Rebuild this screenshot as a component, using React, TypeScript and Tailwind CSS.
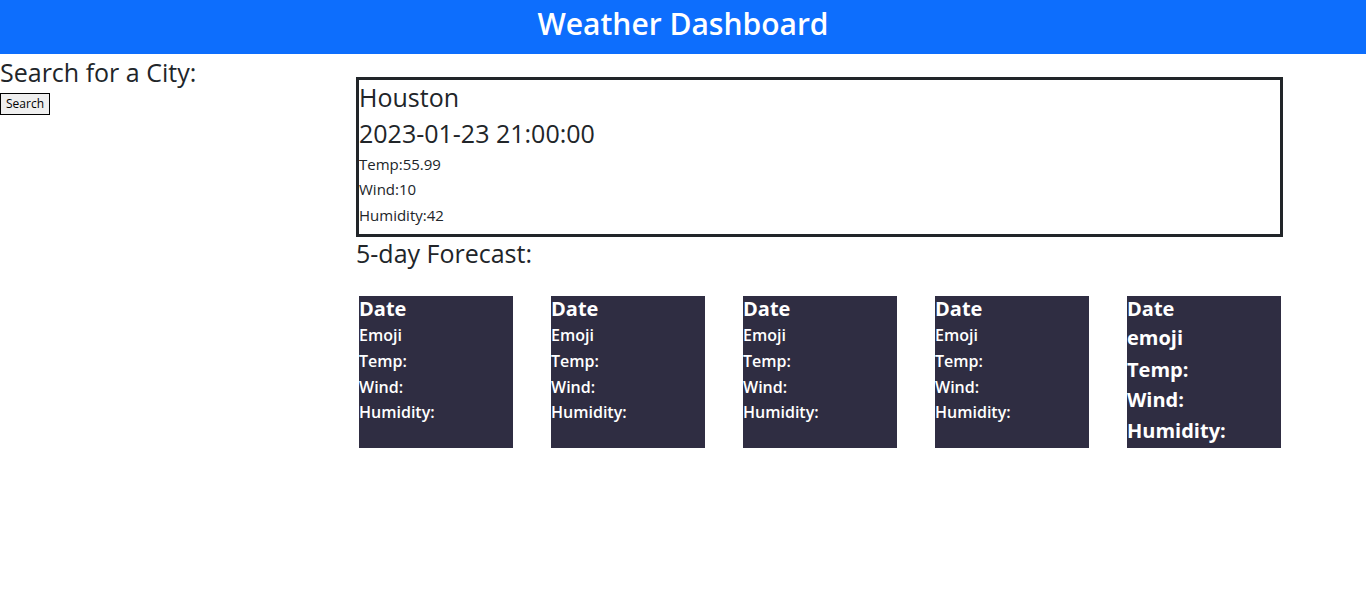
import React from "react";

const font = { fontFamily: '"Open Sans", "Noto Sans", sans-serif' };

function SmallCard() {
  return (
    <div className="w-[154px] h-[152px] bg-[#2f2d42] text-white font-semibold">
      <div className="text-[20px] font-bold leading-[26px]">Date</div>
      <div className="text-[16px] leading-[26px]">Emoji</div>
      <div className="text-[16px] leading-[26px]">Temp:</div>
      <div className="text-[16px] leading-[26px]">Wind:</div>
      <div className="text-[16px] leading-[25px]">Humidity:</div>
    </div>
  );
}

function BigCard() {
  return (
    <div className="w-[154px] h-[152px] bg-[#2f2d42] text-white font-bold">
      <div className="text-[20px] leading-[26px]">Date</div>
      <div className="text-[20px] leading-[32px]">emoji</div>
      <div className="text-[20px] leading-[31px]">Temp:</div>
      <div className="text-[20px] leading-[30px]">Wind:</div>
      <div className="text-[20px] leading-[31px]">Humidity:</div>
    </div>
  );
}

export default function App() {
  return (
    <div className="w-[1366px] h-[610px] bg-white text-[#212529]" style={font}>
      <header className="h-[54px] bg-[#0d6efd] flex items-center justify-center pb-[7px]">
        <h1 className="text-white text-[30px] font-semibold leading-none">Weather Dashboard</h1>
      </header>
      <div className="flex">
        <aside className="w-[356px] shrink-0">
          <h2 className="text-[25px] font-medium leading-[36px]">Search for a City:</h2>
          <button className="mt-[2px] h-[22px] px-[5px] text-[12px] leading-none border border-black bg-[#efefef] text-black">
            Search
          </button>
        </aside>
        <main className="flex-1">
          <section className="mt-[23px] w-[927px] h-[160px] border-[3px] border-[#212529]">
            <div className="text-[25px] font-medium leading-[34px]">Houston</div>
            <div className="text-[25px] font-medium leading-[36px] mt-[1px]">2023-01-23 21:00:00</div>
            <div className="text-[15px] leading-[26px]">Temp:55.99</div>
            <div className="text-[15px] leading-[25px]">Wind:10</div>
            <div className="text-[15px] leading-[26px]">Humidity:42</div>
          </section>
          <h2 className="text-[25px] font-medium leading-[36px] -mt-[2px]">5-day Forecast:</h2>
          <div className="flex gap-[38px] pl-[3px] mt-[25px]">
            <SmallCard />
            <SmallCard />
            <SmallCard />
            <SmallCard />
            <BigCard />
          </div>
        </main>
      </div>
    </div>
  );
}
